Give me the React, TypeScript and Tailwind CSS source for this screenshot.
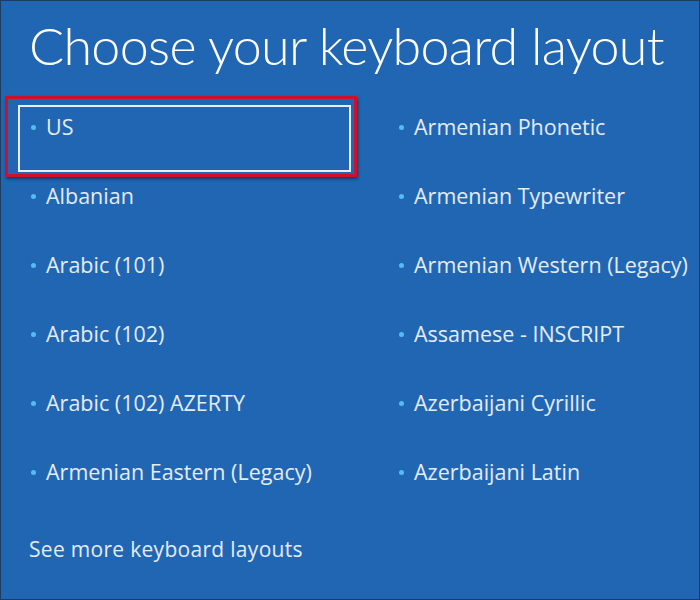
import React from "react";

const left = ["US", "Albanian", "Arabic (101)", "Arabic (102)", "Arabic (102) AZERTY", "Armenian Eastern (Legacy)"];
const right = ["Armenian Phonetic", "Armenian Typewriter", "Armenian Western (Legacy)", "Assamese - INSCRIPT", "Azerbaijani Cyrillic", "Azerbaijani Latin"];

function Item({ label, selected }: { label: string; selected?: boolean }) {
  return (
    <div className="relative h-[69px] pt-4 pl-[25px]">
      {selected && (
        <>
          <div className="absolute left-[-1px] top-0 w-[352px] h-[81px] border-[3px] border-[#d0102a] shadow-[1px_2px_3px_rgba(0,0,0,0.45)]" />
          <div className="absolute left-[12px] top-[9px] w-[333px] h-[67px] border-2 border-[#e8eef6]" />
        </>
      )}
      <div className="relative flex items-center h-[30px]">
        <span className="w-[5px] h-[5px] rounded-full bg-[#52bdf0]" />
        <span className="ml-[10px] text-[21.5px] text-[#e4ecf6] leading-[30px] whitespace-nowrap">{label}</span>
      </div>
    </div>
  );
}

export default function App() {
  return (
    <div className="w-[700px] h-[600px] bg-[#2166b2] border border-[#1c3d63] overflow-hidden" style={{ fontFamily: '"Open Sans", "Noto Sans", sans-serif' }}>
      <h1
        className="pl-[28px] pt-[12px] pb-[2px] h-[95px] text-[52px] font-light text-white leading-[64px] whitespace-nowrap tracking-[-0.7px]"
        style={{ fontFamily: 'Lato, "Open Sans", sans-serif' }}
      >
        Choose your keyboard layout
      </h1>
      <div className="grid grid-cols-[368px_1fr] pl-[5px]">
        <div>
          {left.map((l, i) => (
            <Item key={l} label={l} selected={i === 0} />
          ))}
        </div>
        <div>
          {right.map((l) => (
            <Item key={l} label={l} />
          ))}
        </div>
      </div>
      <div className="pl-[28px] mt-[24px] text-[21px] tracking-[0.3px] text-[#e4ecf6] leading-[30px]">See more keyboard layouts</div>
    </div>
  );
}
